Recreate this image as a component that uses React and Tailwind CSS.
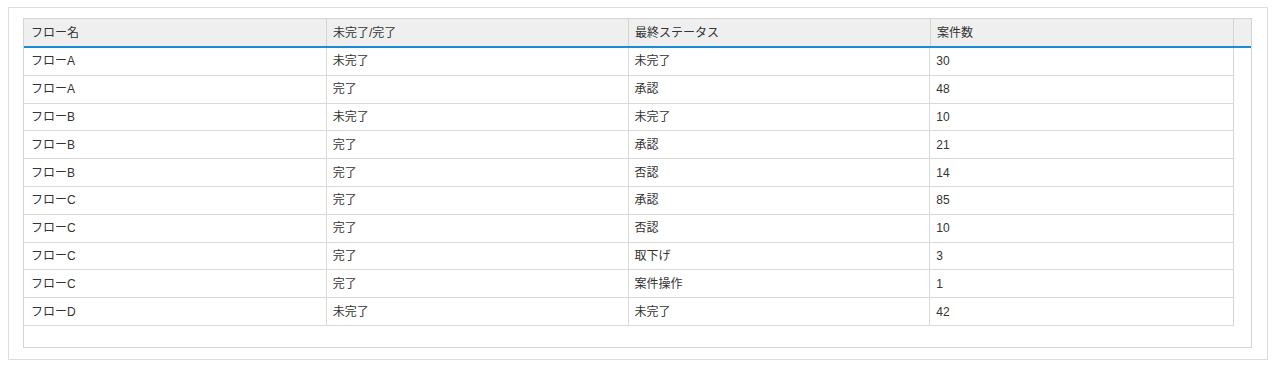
import React from "react";

const rows = [
  ["フローA", "未完了", "未完了", "30"],
  ["フローA", "完了", "承認", "48"],
  ["フローB", "未完了", "未完了", "10"],
  ["フローB", "完了", "承認", "21"],
  ["フローB", "完了", "否認", "14"],
  ["フローC", "完了", "承認", "85"],
  ["フローC", "完了", "否認", "10"],
  ["フローC", "完了", "取下げ", "3"],
  ["フローC", "完了", "案件操作", "1"],
  ["フローD", "未完了", "未完了", "42"],
];

const headers = ["フロー名", "未完了/完了", "最終ステータス", "案件数"];
const widths = ["w-[303px] pl-[7px]", "w-[302px] pl-[6px]", "w-[302px] pl-[6px]", "w-[303px] pl-[6px]"];

export default function App() {
  return (
    <div
      className="w-[1275px] h-[366px] bg-white pt-[7px] pl-[8px] text-[12px] text-[#333]"
      style={{ fontFamily: '"Liberation Sans", "Noto Sans CJK JP", sans-serif' }}
    >
      <div className="w-[1260px] h-[353px] border border-[#dddddd] pt-[10px] pl-[14px]">
        <div className="w-[1229px] h-[330px] border border-[#d4d4d4] flex flex-col">
          <div className="flex h-[27px] bg-[#efefef] border-b-2 border-[#1a8bd6] box-content">
            {headers.map((h, i) => (
              <div
                key={i}
                className={`${widths[i]} border-r border-[#d4d4d4] flex items-center`}
              >
                {h}
              </div>
            ))}
            <div className="flex-1" />
          </div>
          <div className="w-[1210px] border-r border-[#d4d4d4]">
            {rows.map((r, i) => (
              <div key={i} className="flex h-[27.8px] border-b border-[#d9d9d9]">
                {r.map((c, j) => (
                  <div
                    key={j}
                    className={`${widths[j]} flex items-center ${j < 3 ? "border-r border-[#d9d9d9]" : ""}`}
                  >
                    {c}
                  </div>
                ))}
              </div>
            ))}
          </div>
        </div>
      </div>
    </div>
  );
}
